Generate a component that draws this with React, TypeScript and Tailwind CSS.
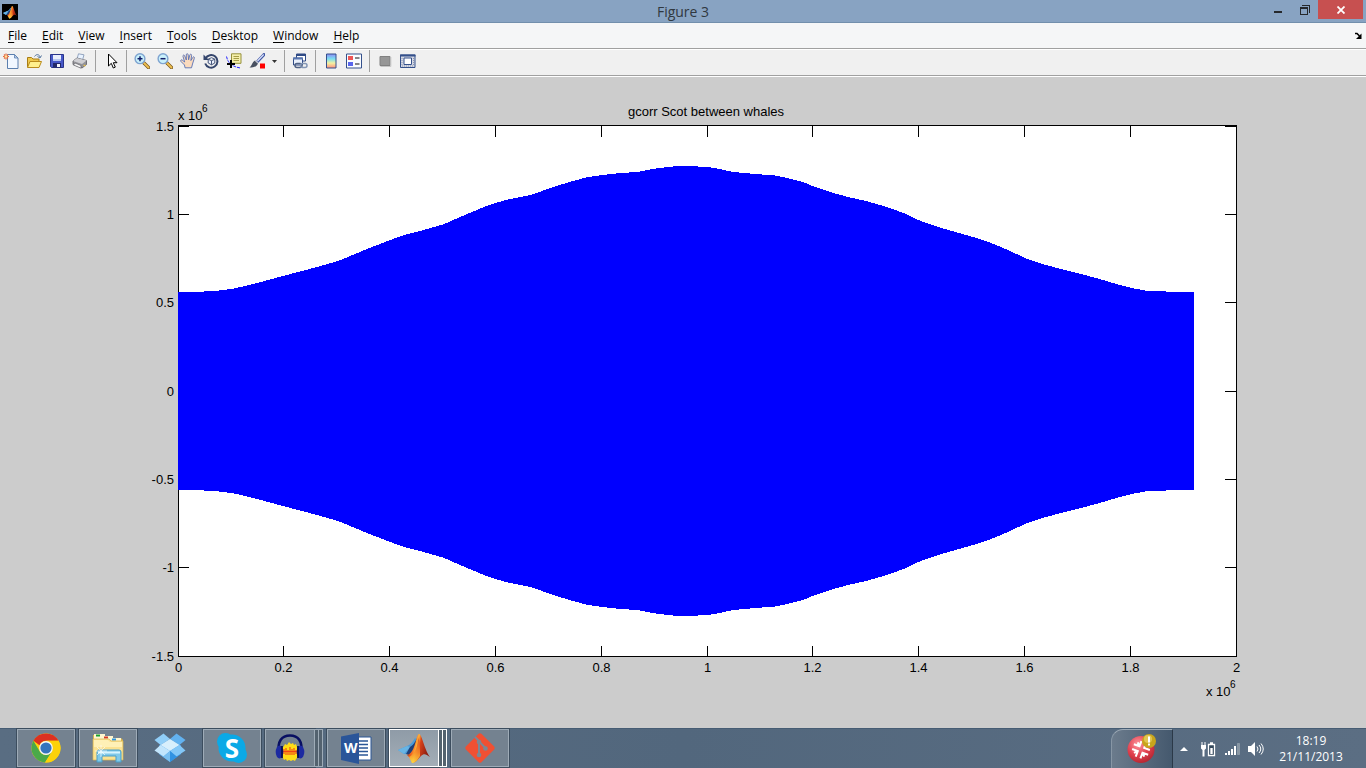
import React from "react";

const menus = ["File", "Edit", "View", "Insert", "Tools", "Desktop", "Window", "Help"];

type Point = [number, number];

const MIRROR = 782;

const upper: Point[] = [
  [178, 292], [202, 291.6], [218, 290.6], [234, 288.6], [257, 283], [283, 276], [317, 267], [331, 263], [343, 259],
  [355, 254], [367, 249], [385, 242], [393, 239], [404, 235], [420, 231], [443, 224.5], [450, 221.5], [460, 217],
  [472, 212], [485, 206.5], [497, 202.5], [510, 199], [530, 195], [542, 191], [553, 187], [573, 181], [588, 177],
  [603, 175], [620, 173], [637, 172], [652, 169], [668, 167], [682, 165.5], [692, 166], [710, 167.4], [720, 169],
  [733, 172], [755, 174], [775, 175.5], [785, 177.5], [803, 182], [815, 187], [830, 192], [850, 197.5], [868, 201.5],
  [880, 205], [893, 209], [906, 214], [914, 218], [923, 222], [943, 228.5], [965, 234.7], [980, 239], [995, 244.5],
  [1010, 251], [1025, 258], [1042, 264], [1063, 269.5], [1083, 274.5], [1103, 280], [1120, 285], [1134, 288.5],
  [1145, 290.5], [1168, 291.6], [1194, 292.4],
];

const lower: Point[] = upper.map(([x, y]) => [x, MIRROR - y]);

const outline = [...upper, ...lower.slice().reverse()].map((p) => p.join(",")).join(" ");

const xTicks = [
  { x: 178, label: "0" }, { x: 283, label: "0.2" }, { x: 389, label: "0.4" }, { x: 495, label: "0.6" },
  { x: 601, label: "0.8" }, { x: 707, label: "1" }, { x: 812, label: "1.2" }, { x: 918, label: "1.4" },
  { x: 1024, label: "1.6" }, { x: 1130, label: "1.8" }, { x: 1236, label: "2" },
];

const yTicks = [
  { y: 126, label: "1.5" }, { y: 214, label: "1" }, { y: 302, label: "0.5" }, { y: 391, label: "0" },
  { y: 479, label: "-0.5" }, { y: 567, label: "-1" }, { y: 656, label: "-1.5" },
];

function Icon({ children, className = "size-4" }: { children: React.ReactNode; className?: string }) {
  return (
    <svg viewBox="0 0 16 16" className={className} aria-hidden="true">
      {children}
    </svg>
  );
}

function MatlabLogo({ className }: { className: string }) {
  return (
    <svg viewBox="0 0 32 32" className={className} aria-hidden="true">
      <defs>
        <linearGradient id="peak" x1="0" x2="1" y1="0" y2="0.3">
          <stop offset="0" stopColor="#7a1a10" />
          <stop offset="0.35" stopColor="#f0641e" />
          <stop offset="0.5" stopColor="#ffb43c" />
          <stop offset="0.62" stopColor="#d8421a" />
          <stop offset="1" stopColor="#8c1c10" />
        </linearGradient>
        <linearGradient id="flame" x1="0" x2="0" y1="0" y2="1">
          <stop offset="0" stopColor="#d84a1a" />
          <stop offset="0.6" stopColor="#f7902a" />
          <stop offset="1" stopColor="#ffe040" />
        </linearGradient>
      </defs>
      <path d="M0 18 9 14c3-1 5-3 8-8l3 3-5 10-6 3-3 0z" fill="#4b9bd8" />
      <path d="m9 14 3 1-6 7-6-4z" fill="#68b4e4" />
      <path d="M12 15c4-2 6-7 8-11l-4 13-5 6-3-1z" fill="#1f3f78" />
      <path d="M21 2c3 0 5 15 11 23-4-3-6-4-9-1-3 3-5 7-9 7-1-4-3-6-5-8 6-1 8-11 10-18 1-2 1-3 2-3z" fill="url(#peak)" />
      <path d="M20 5c0 9-3 17-9 20l3 6c4 0 6-4 8-7 0-7 0-14-2-19z" fill="url(#flame)" opacity=".85" />
    </svg>
  );
}

function Lens({ plus }: { plus: boolean }) {
  return (
    <Icon>
      <path d="m10 10 4.500 4.500" stroke="#7a5a20" strokeWidth="3.4" strokeLinecap="round" />
      <path d="m10 10 4.500 4.500" stroke="#f0c050" strokeWidth="1.800" strokeLinecap="round" />
      <circle cx="6" cy="5.700" r="4.900" fill="#c9f0fb" stroke="#7ea3d0" strokeWidth="1.400" />
      <path d="M3.500 5.700h5" stroke="#101d68" strokeWidth="1.500" />
      {plus && <path d="M6 3.200v5" stroke="#101d68" strokeWidth="1.500" />}
    </Icon>
  );
}

const icons = {
  newFile: (
    <Icon>
      <path d="M4.500 1.500h7l3.500 3.500v10.500h-10.500z" fill="#f1f7ff" stroke="#5b7fae" />
      <path d="M11.500 1.500v3.500h3.500z" fill="#bcd0ea" stroke="#5b7fae" strokeWidth=".8" />
      <path d="M3 .5v6M0 3.500h6M1 1.500l4 4M5 1.500l-4 4" stroke="#e66a3c" strokeWidth="1.100" />
      <circle cx="3" cy="3.500" r="1.300" fill="#ffe6a0" />
    </Icon>
  ),
  open: (
    <Icon>
      <path d="M1.500 14V4.500h4l1.500 1.500h6V14z" fill="#f0c94c" stroke="#a87c14" />
      <path d="M1.500 14.500 4 8.500h11.500l-2.500 6z" fill="#fff08e" stroke="#b98b1c" />
      <path d="M8.500 3.500c2-3 5-2 5.500.5M15.500 2.500 14 5l-2.500-1.500" fill="none" stroke="#54759f" />
    </Icon>
  ),
  save: (
    <Icon>
      <path d="M1.500 1.500h13v13h-12l-1-1z" fill="#4758c8" stroke="#29348a" />
      <path d="M4 2h8v6H4z" fill="#e9eefc" />
      <path d="M4 6h8v2H4z" fill="#b7c7ef" />
      <path d="M4 10h8v4.500H4z" fill="#22286a" />
      <path d="M8 11h3v3H8z" fill="#f5f5fb" />
    </Icon>
  ),
  print: (
    <Icon>
      <path d="M5 6 6.500.8l5.500 1L10.500 7z" fill="#e8f2ff" stroke="#7d92b0" strokeWidth=".8" />
      <path d="m1 8 4-3 9.500 2.500v4L10 15 1 11.500z" fill="#94949a" stroke="#58585e" strokeWidth=".8" />
      <path d="m1 8 4-3 9.500 2.500L10 11z" fill="#cfcfd3" />
      <path d="m3 10 6 2.500v2.700L1.500 12z" fill="#f4f4f4" stroke="#66666c" strokeWidth=".7" />
      <path d="M11.500 12.500h2" stroke="#e5bd45" strokeWidth="1.400" />
    </Icon>
  ),
  pointer: (
    <Icon>
      <path d="M5.500 1v12l2.800-2.700 2 4.700 2-.9-2-4.400H14z" fill="#fff" stroke="#000" />
    </Icon>
  ),
  hand: (
    <Icon>
      <path
        d="M5 14.800 4.500 12 1 8.500C0 7 1.500 6.300 2.500 7.300L4.700 9 3 3.500c-.4-1.600 1.200-2 1.700-.6L6.300 7V1.800C6.300.3 8 .3 8.200 1.800l.4 5 1.200-4.700c.4-1.500 2-1 1.800.5L10.900 7.500l1.800-3c.8-1.300 2.100-.6 1.600.8L12.500 11 11.500 14.800z"
        fill="#fadabd"
        stroke="#5870b4"
        strokeWidth=".9"
      />
    </Icon>
  ),
  rotate: (
    <Icon>
      <path d="M2.500 5.500A6.300 6.300 0 1 1 2.200 10.500" fill="none" stroke="#34456c" strokeWidth="2" />
      <path d="M.5 1.500v5.500H6z" fill="#34456c" />
      <path d="m8.500 4.700 3.300 1.500v3.800L8.500 11.800 5.200 10V6.200zM5.200 6.200l3.300 1.500 3.300-1.500M8.500 7.700v4" fill="#edf3ff" stroke="#34456c" strokeWidth=".9" />
    </Icon>
  ),
  cursor: (
    <Icon>
      <path d="M5.500.8h9.500v9.500H5.500z" fill="#f4efab" stroke="#96903c" />
      <path d="M7.500 3.500h5.500M7.500 5.500h5.500M7.500 7.500h5.500" stroke="#a69d48" />
      <path d="M.5 3.500c1 5 4 10 14 11.500" fill="none" stroke="#2020ff" strokeDasharray="3 1" />
      <path d="M5 7v8M1 11h8" stroke="#000" strokeWidth="2" />
    </Icon>
  ),
  brush: (
    <Icon>
      <path d="M15 1.500 8 9" stroke="#4057a4" strokeWidth="3" strokeLinecap="round" />
      <path d="M14.700 1.500 8.500 8" stroke="#dae1fa" strokeWidth="1.200" />
      <path d="m6 7.500 3 3c-2 4-5 4-8.500 4C3 13 3 9 6 7.500z" fill="#485060" />
      <path d="m6.500 7.500 2.500 2.500" stroke="#c0c4cf" strokeWidth="1.500" />
      <path d="M11 10.500h5v5h-5z" fill="#f00" />
    </Icon>
  ),
  link: (
    <Icon>
      <path d="M4.500 1h9v7h-9z" fill="#fff" stroke="#304b86" />
      <path d="M4 1h10v2H4z" fill="#304b86" />
      <path d="M1.500 5h9v7h-9z" fill="#e9f0fc" stroke="#304b86" />
      <path d="M1 4.500h10v2H1z" fill="#5876b1" />
      <rect x="3" y="10.500" width="7" height="4" rx="2" fill="none" stroke="#506284" strokeWidth="1.500" />
      <rect x="8.500" y="10.500" width="6.500" height="4" rx="2" fill="none" stroke="#8496b5" strokeWidth="1.500" />
    </Icon>
  ),
  colorbar: (
    <Icon>
      <defs>
        <linearGradient id="spectrum" x1="0" y1="0" x2="0" y2="1">
          <stop offset="0" stopColor="#8d8df5" />
          <stop offset="0.35" stopColor="#78dff0" />
          <stop offset="0.65" stopColor="#f4f1a0" />
          <stop offset="1" stopColor="#ff8f80" />
        </linearGradient>
      </defs>
      <path d="M3.500 1h9.500v14H3.500z" fill="url(#spectrum)" stroke="#34508b" />
    </Icon>
  ),
  legend: (
    <Icon>
      <path d="M.5 1h15v14H.5z" fill="#fafcff" stroke="#34508b" />
      <path d="M2 3h5v4H2z" fill="#ed5555" />
      <path d="M2 9h5v4H2z" fill="#5865ed" />
      <path d="M9 5h4.500M9 11h4.500" stroke="#111" />
    </Icon>
  ),
  hide: (
    <Icon>
      <path d="M3 3.500h10v9H3z" fill="#969696" stroke="#808080" />
      <path d="M13.800 4v9.500H3.500" stroke="#c4c4c4" fill="none" />
    </Icon>
  ),
  dock: (
    <Icon>
      <path d="M.5 2h14.500v12.500H.5z" fill="#d4d8e4" stroke="#34508b" />
      <path d="M0 1.500h15.500v2H0z" fill="#34508b" />
      <path d="M4 5h7.500v6.500H4z" fill="#fff" stroke="#34508b" />
      <path d="M2 5v7M13.500 5v7M2 13h12" stroke="#8e97b0" strokeDasharray="1 1" />
    </Icon>
  ),
};

function Tool({ label, children }: { label: string; children: React.ReactNode }) {
  return (
    <button type="button" aria-label={label} className="flex w-4 items-center justify-center">
      {children}
    </button>
  );
}

function Divider() {
  return <span className="h-[22px] w-px bg-[#a0a0a0]" />;
}

function Chart() {
  return (
    <svg
      viewBox="0 77 1366 651"
      className="h-full w-full"
      role="img"
      aria-label="gcorr Scot between whales"
      fontFamily="'Liberation Sans', Arial, sans-serif"
      fontSize="13"
    >
      <text x="706" y="116" textAnchor="middle">gcorr Scot between whales</text>
      <text x="178" y="120">x 10</text>
      <text x="202" y="112" fontSize="10">6</text>
      <g shapeRendering="crispEdges">
        <rect x="178" y="125" width="1059" height="532" fill="#fff" />
        <rect x="178.500" y="125.500" width="1058" height="531" fill="none" stroke="#000" />
        {xTicks.map(({ x }) => (
          <path key={x} d={`M${x + 0.5} 126v11M${x + 0.5} 646v10`} stroke="#000" />
        ))}
        {yTicks.map(({ y }) => (
          <path key={y} d={`M178 ${y + 0.5}h11M1225 ${y + 0.5}h11`} stroke="#000" />
        ))}
        <polygon points={outline} fill="#00f" />
      </g>
      {xTicks.map(({ x, label }) => (
        <text key={x} x={x + 0.5} y="672" textAnchor="middle">{label}</text>
      ))}
      {yTicks.map(({ y, label }) => (
        <text key={y} x="174" y={y + 5} textAnchor="end">{label}</text>
      ))}
      <text x="1206" y="696">x 10</text>
      <text x="1230" y="688" fontSize="10">6</text>
    </svg>
  );
}

const ChromeLogo = (
  <svg viewBox="0 0 32 32" className="size-8" aria-hidden="true">
    <circle cx="16" cy="16" r="14.500" fill="#fcd209" />
    <path d="M3.400 8.800A14.500 14.500 0 0 1 28.600 8.800H16a7.200 7.200 0 0 0-6.500 4.500z" fill="#dc3020" />
    <path d="M3.400 8.800A14.500 14.500 0 0 0 15 30.500l6.500-10.500a7 7 0 0 1-12-1z" fill="#4aa949" />
    <path d="M16 8.800h12.600A14.500 14.500 0 0 1 15 30.500L22 20a7.200 7.200 0 0 0-1-9.500z" fill="#fcd209" />
    <circle cx="16" cy="16" r="6.900" fill="#f3f6f9" />
    <circle cx="16" cy="16" r="5.600" fill="#3474bd" />
  </svg>
);

const ExplorerLogo = (
  <svg viewBox="0 0 32 32" className="size-8" aria-hidden="true">
    <path d="M1 28V3h10l1 3h17l2 2v20z" fill="#d9b44a" />
    <path d="M2 2h11v5H2z" fill="#fff6cf" />
    <path d="M4 2.500h4v2H4z" fill="#18a030" />
    <path d="M10 4h11v5H10z" fill="#fff6cf" />
    <path d="M12 4.500h4v2h-4z" fill="#d43a26" />
    <path d="M18 6h11v5H18z" fill="#fff6cf" />
    <path d="M20 6.500h4v2h-4z" fill="#2b94e0" />
    <path d="M1 7h16l2 2h12v19H1z" fill="#fbe292" stroke="#d8b653" strokeWidth=".7" />
    <path d="M2 8h14l2 2h12v5H2z" fill="#fff0b6" />
    <path d="M5 30V20q0-2 2-2h20q2 0 2 2v10h-5v-6H10v6z" fill="#80c9ea" stroke="#4a9fc8" />
    <path d="M6 19.500h22v2H6z" fill="#d8f4ff" />
    <path d="M9 13v12M3 19h12M5 15l8 8M13 15l-8 8" stroke="#fff" strokeWidth=".8" opacity=".8" />
  </svg>
);

const DropboxLogo = (
  <svg viewBox="0 0 32 32" className="size-8" aria-hidden="true">
    <path d="m16 7 11 6.500v8.500l-11 8-11-8v-8.500z" fill="#4ba3ea" />
    <path d="M9.500 1.500 16 7 6.500 13 .5 8z" fill="#90cef8" />
    <path d="M22.500 1.500 16 7l9.500 6 6-5z" fill="#62b2f0" />
    <path d="m16 7 9.500 6-9.500 6-9.500-6z" fill="#d8effc" />
    <path d="m6.500 13 9.500 6-6.500 5.500-9-6z" fill="#c2e5fc" />
    <path d="m25.500 13-9.500 6 6.500 5.500 9-6z" fill="#83c7f7" />
    <path d="m5 22 4.500 2.500L16 19v11z" fill="#79bff0" />
    <path d="m27 22-4.500 2.500L16 19v11z" fill="#3192e2" />
  </svg>
);

const SkypeLogo = (
  <span className="relative flex size-8 items-center justify-center">
    <svg viewBox="0 0 32 32" className="size-8" aria-hidden="true">
      <circle cx="16" cy="16" r="13.500" fill="#0ba9e6" />
      <circle cx="9.500" cy="9.500" r="8.500" fill="#0ba9e6" />
      <circle cx="22.500" cy="22.500" r="8.500" fill="#0ba9e6" />
    </svg>
    <span className="absolute text-[26px] leading-8 font-bold text-white">S</span>
  </span>
);

const AudacityLogo = (
  <svg viewBox="0 0 32 32" className="size-8" aria-hidden="true">
    <path d="M5 21C3 9 8 3.500 16 3.500S29 9 27 21" fill="none" stroke="#080f62" strokeWidth="2.600" />
    <path d="M8 16l2-2 1-2 2 1 2-3 2 2 2-1 1 2 2-1 1 3 1 1v9l-2 2-1 2-2-1-2 1-2-1-2 1-1-2-2 1-1-2-1-1z" fill="#ffdc16" />
    <path d="M8 19.500h16M10 17v5M12 16v7M14 18v5M16 15v8M18 17v6M20 16v7M22 18v4" stroke="#f04413" strokeWidth="1.100" />
    <ellipse cx="5.500" cy="20" rx="3.800" ry="6.500" fill="#1c2aa1" />
    <ellipse cx="26.500" cy="20" rx="3.800" ry="6.500" fill="#1c2aa1" />
    <path d="M8 14v12M24 14v12" stroke="#080f50" strokeWidth="1.800" />
  </svg>
);

const WordLogo = (
  <span className="relative flex size-8 items-center">
    <svg viewBox="0 0 32 32" className="size-8" aria-hidden="true">
      <path d="M17 5h14v23H17z" fill="#fff" stroke="#2b5797" />
      <path d="M19 9h9M19 12.500h9M19 16h9M19 19.500h9M19 23h9" stroke="#2b5797" strokeWidth="1.500" />
      <path d="M1 4.500 19 1v31L1 28z" fill="#2a5599" />
    </svg>
    <span className="absolute left-1 text-sm leading-4 font-bold text-white">W</span>
  </span>
);

const GitLogo = (
  <svg viewBox="0 0 32 32" className="size-8" aria-hidden="true">
    <rect x="5" y="5" width="22" height="22" rx="2" fill="#f05033" transform="rotate(45 16 16)" />
    <path d="m11 5 4 4v14M15.500 10l6 6" stroke="#7c8794" strokeWidth="2" fill="none" />
    <circle cx="15" cy="10" r="2.300" fill="#7c8794" />
    <circle cx="15" cy="23" r="2.300" fill="#7c8794" />
    <circle cx="21.500" cy="16.500" r="2.300" fill="#7c8794" />
  </svg>
);

type TaskApp = { name: string; icon: React.ReactNode; kind: "open" | "pinned" | "stack" | "active" };

const apps: TaskApp[] = [
  { name: "Chrome", icon: ChromeLogo, kind: "open" },
  { name: "File Explorer", icon: ExplorerLogo, kind: "open" },
  { name: "Dropbox", icon: DropboxLogo, kind: "pinned" },
  { name: "Skype", icon: SkypeLogo, kind: "open" },
  { name: "Audacity", icon: AudacityLogo, kind: "stack" },
  { name: "Word", icon: WordLogo, kind: "open" },
  { name: "MATLAB", icon: <MatlabLogo className="size-8" />, kind: "active" },
  { name: "Git", icon: GitLogo, kind: "open" },
];

const frame = {
  open: "border border-[#9eabb7] bg-[#748290] outline outline-[#3c4d5e]",
  pinned: "border border-transparent",
  stack: "border border-[#9eabb7] bg-[#748290] outline outline-[#3c4d5e]",
  active: "border border-white bg-linear-to-b from-[#8f9ba7] to-[#a3adb7] outline outline-[#3c4d5e]",
};

function TaskButton({ app }: { app: TaskApp }) {
  const stacked = app.kind === "stack" || app.kind === "active";
  const slice =
    app.kind === "active"
      ? "w-1 border-y border-r border-white bg-[#53626f]"
      : "w-1 border-y border-r border-[#9eabb7] bg-[#53626f]";
  return (
    <button type="button" aria-label={app.name} className="flex w-[58px]">
      <span className={`flex h-full flex-1 items-center justify-center ${frame[app.kind]}`}>{app.icon}</span>
      {stacked && (
        <>
          <span className={slice} />
          <span className={slice} />
        </>
      )}
    </button>
  );
}

export default function App() {
  return (
    <div className="flex h-screen flex-col bg-[#cccccc] font-['Open_Sans','Noto_Sans',sans-serif] text-xs text-black">
      <header className="grid h-[23px] grid-cols-[1fr_auto_1fr] border-b border-[#728fac] bg-[#88a3c2]">
        <div className="flex items-center pl-0.5">
          <span className="flex size-4 items-center justify-center bg-black">
            <MatlabLogo className="size-3.5" />
          </span>
        </div>
        <h1 className="text-sm leading-[23px] text-[#303840]">Figure 3</h1>
        <div className="flex items-start justify-end pr-[3px]">
          <button type="button" aria-label="Minimize" className="flex h-[19px] w-[26px] items-center justify-center">
            <svg viewBox="0 0 10 10" className="size-2.5" aria-hidden="true"><path d="M1 6h8v2H1z" fill="#26292c" /></svg>
          </button>
          <button type="button" aria-label="Restore" className="flex h-[19px] w-[27px] items-center justify-center">
            <svg viewBox="0 0 10 10" className="size-2.5" shapeRendering="crispEdges" aria-hidden="true">
              <path d="M2 .5h7.500V8M.5 2.500h7v7h-7zM0 3.500h8" fill="none" stroke="#26292c" />
            </svg>
          </button>
          <button type="button" aria-label="Close" className="flex h-[19px] w-[45px] items-center justify-center bg-[#c75050]">
            <svg viewBox="0 0 8 8" className="size-2" aria-hidden="true"><path d="m.5.5 7 7M7.500.5l-7 7" stroke="#fff" strokeWidth="1.800" /></svg>
          </button>
        </div>
      </header>

      <nav className="flex h-[26px] items-center gap-[15px] border-b border-[#a0a0a0] bg-[#f5f6f7] pr-1 pl-2">
        {menus.map((m) => (
          <button type="button" key={m} className="leading-4">
            <span className="underline underline-offset-2">{m[0]}</span>
            {m.slice(1)}
          </button>
        ))}
        <button type="button" aria-label="Dock figure" className="ml-auto">
          <svg viewBox="0 0 8 8" className="size-2" aria-hidden="true">
            <path d="M1 1.500h2l2.500 2.500" fill="none" stroke="#000" strokeWidth="1.600" />
            <path d="M7.500 1.500V7H2z" fill="#000" />
          </svg>
        </button>
      </nav>

      <div className="flex h-7 items-center gap-[7px] border-t border-b border-t-white border-b-white bg-[#f0f0f0] pb-1 pl-[3px] shadow-[inset_0_-1px_0_#a0a0a0]">
        <Tool label="New Figure">{icons.newFile}</Tool>
        <Tool label="Open File">{icons.open}</Tool>
        <Tool label="Save Figure">{icons.save}</Tool>
        <Tool label="Print Figure">{icons.print}</Tool>
        <Divider />
        <Tool label="Edit Plot">{icons.pointer}</Tool>
        <Divider />
        <Tool label="Zoom In"><Lens plus /></Tool>
        <Tool label="Zoom Out"><Lens plus={false} /></Tool>
        <Tool label="Pan">{icons.hand}</Tool>
        <Tool label="Rotate 3D">{icons.rotate}</Tool>
        <Tool label="Data Cursor">{icons.cursor}</Tool>
        <Tool label="Brush">{icons.brush}</Tool>
        <button type="button" aria-label="Brush options" className="flex w-[5px] items-center">
          <svg viewBox="0 0 5 3" className="w-[5px]" aria-hidden="true"><path d="M0 0h5L2.500 3z" fill="#333" /></svg>
        </button>
        <Divider />
        <Tool label="Link Plot">{icons.link}</Tool>
        <Divider />
        <Tool label="Insert Colorbar">{icons.colorbar}</Tool>
        <Tool label="Insert Legend">{icons.legend}</Tool>
        <Divider />
        <Tool label="Hide Plot Tools">{icons.hide}</Tool>
        <Tool label="Show Plot Tools">{icons.dock}</Tool>
      </div>

      <main className="min-h-0 flex-1">
        <Chart />
      </main>

      <footer className="flex h-10 justify-between border-t border-[#465c73] bg-linear-to-r from-[#596d82] via-[#52677d] to-[#5b6e83] text-white">
        <div className="flex gap-1 pb-px pl-[17px]">
          {apps.map((app) => (
            <TaskButton key={app.name} app={app} />
          ))}
        </div>
        <div className="flex items-center">
          <button type="button" aria-label="Notifications" className="flex h-full w-[62px] items-center justify-center rounded-tl-xl border-t border-r border-l border-t-[#9eabb7] border-r-[#2b3948] border-l-[#8796a5] bg-linear-to-r from-[#6b7b8c] to-[#45596e]">
            <svg viewBox="0 0 30 30" className="size-[30px]" aria-hidden="true">
              <defs>
                <radialGradient id="ball" cx=".4" cy=".3" r=".7">
                  <stop offset="0" stopColor="#ff98a0" />
                  <stop offset="0.6" stopColor="#e0404e" />
                  <stop offset="1" stopColor="#b82834" />
                </radialGradient>
              </defs>
              <circle cx="14" cy="15.500" r="13.500" fill="url(#ball)" />
              <path
                d="M11.500 7.500v5.500h-6M16.500 7.500v5.500h6M5.500 18h6v6M22.500 18h-6v6M8.500 10l3 3M8.500 21l3-3M19.500 21l-3-3"
                fill="none"
                stroke="#fff"
                strokeWidth="2"
                transform="rotate(20 14 15.5)"
              />
              <circle cx="22" cy="7" r="7" fill="#c8a51c" />
              <circle cx="21" cy="5" r="4" fill="#e0c552" />
              <path d="M21 2.500h2v6h-2zM21 9.500h2v2h-2z" fill="#fff" />
            </svg>
          </button>
          <button type="button" aria-label="Show hidden icons" className="ml-[7px] w-2">
            <svg viewBox="0 0 8 4" className="w-2" aria-hidden="true"><path d="M0 4h8L4 0z" fill="#fff" /></svg>
          </button>
          <div className="ml-3 flex items-center gap-2">
            <svg viewBox="0 0 16 16" className="size-4" aria-label="Battery" role="img">
              <path d="M8.500 3.500h6v11h-6zM10 2h3" fill="#33485c" stroke="#fff" strokeWidth="1.300" />
              <path d="M10.300 7h2.400v6h-2.400z" fill="#fff" />
              <path d="M1 4h5v3.500L4.500 9v6.500h-2V9L1 7.500zM1.500 1h1v3h-1zM4.500 1h1v3h-1z" fill="#fff" />
            </svg>
            <svg viewBox="0 0 16 16" className="size-4" aria-label="Signal" role="img">
              <path d="M1 12h2v2H1zM4 10h2v4H4zM7 8h2v6H7zM10 5h2v9h-2z" fill="#fff" />
              <path d="M13.500 2.500h2v11h-2z" fill="#8795a2" stroke="#a4b0bb" strokeWidth=".5" />
            </svg>
            <svg viewBox="0 0 16 16" className="size-4" aria-label="Volume" role="img">
              <path d="M0 5h3l4-4v14l-4-4H0z" fill="#fff" />
              <path d="M9 5.500q2 2.500 0 5M11 4q3.500 4 0 8M13 2.500q4.500 5.500 0 11" fill="none" stroke="#fff" strokeWidth="1" />
            </svg>
          </div>
          <time className="mr-2 w-[94px] text-center leading-4">
            18:19
            <br />
            21/11/2013
          </time>
        </div>
      </footer>
    </div>
  );
}
